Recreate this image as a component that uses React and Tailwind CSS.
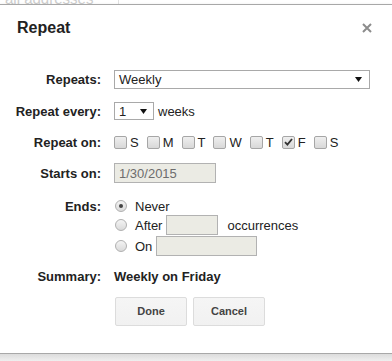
const DAYS = [
  { k: 'su', l: 'S' },
  { k: 'mo', l: 'M' },
  { k: 'tu', l: 'T' },
  { k: 'we', l: 'W' },
  { k: 'th', l: 'T' },
  { k: 'fr', l: 'F', on: true },
  { k: 'sa', l: 'S' },
]

function Arrow() {
  return (
    <svg width="7" height="5" viewBox="0 0 7 5" className="shrink-0">
      <polygon points="0,0 7,0 3.5,5" fill="#111" />
    </svg>
  )
}

function Check({ on }) {
  return (
    <span className="w-[13px] h-[13px] shrink-0 rounded-[2px] border border-[#a6a6a6] bg-gradient-to-b from-[#efefef] to-[#d8d8d8] flex items-center justify-center">
      {on && (
        <svg width="9" height="8" viewBox="0 0 9 8">
          <path d="M1 4.2 L3.4 6.6 L8 1" stroke="#333" strokeWidth="1.8" fill="none" />
        </svg>
      )}
    </span>
  )
}

function Radio({ on }) {
  return (
    <span className="w-[12px] h-[12px] shrink-0 rounded-full border border-[#b0b0b0] bg-gradient-to-b from-[#f4f4f4] to-[#dadada] flex items-center justify-center">
      {on && <span className="w-[4px] h-[4px] rounded-full bg-[#444]" />}
    </span>
  )
}

function Row({ label, h, mt, children }) {
  return (
    <div className={`flex items-center ${h} ${mt}`}>
      <div className="w-[101px] text-right font-bold text-[#222]">{label}</div>
      <div className="pl-[13px] flex items-center h-full">{children}</div>
    </div>
  )
}

export default function App() {
  return (
    <div className="w-[392px] h-[361px] bg-[#ececec] flex flex-col text-[13px] leading-none overflow-hidden" style={{ fontFamily: '"Liberation Sans", Arial, sans-serif' }}>

      {/* page behind the dialog */}
      <div className="h-[4px] bg-white flex overflow-hidden shrink-0">
        <div className="w-[119px] border-r border-[#e2e2e2] pl-[5px] text-[#cdcdcd] text-[15px] leading-none -mt-[9px]">all addresses</div>
      </div>

      {/* dialog */}
      <div className="flex-1 bg-white border-t border-b border-[#a8a8a8] flex flex-col shadow-[0_1px_3px_rgba(0,0,0,0.15)]">

        <div className="flex items-center justify-between pl-[17px] pr-[20px] pt-[13px] h-[33px]">
          <span className="text-[16px] font-bold text-[#222]">Repeat</span>
          <svg width="10" height="10" viewBox="0 0 10 10">
            <path d="M1 1 L9 9 M9 1 L1 9" stroke="#8c8c8c" strokeWidth="2" />
          </svg>
        </div>

        <Row label="Repeats:" h="h-[19px]" mt="mt-[32px]">
          <div className="w-[256px] h-[19px] border border-[#a9a9a9] bg-white flex items-center justify-between pl-[4px] pr-[7px] text-[#222]">
            <span>Weekly</span>
            <Arrow />
          </div>
        </Row>

        <Row label="Repeat every:" h="h-[18px]" mt="mt-[13px]">
          <div className="w-[40px] h-[18px] border border-[#a9a9a9] bg-white flex items-center justify-between pl-[4px] pr-[6px] text-[#222]">
            <span>1</span>
            <Arrow />
          </div>
          <span className="ml-[4px] text-[#222]">weeks</span>
        </Row>

        <Row label="Repeat on:" h="h-[16px]" mt="mt-[14px]">
          {DAYS.map(d => (
            <span key={d.k} className="flex items-center mr-[8px]">
              <Check on={d.on} />
              <span className="ml-[3px] text-[#222]">{d.l}</span>
            </span>
          ))}
        </Row>

        <Row label="Starts on:" h="h-[20px]" mt="mt-[13px]">
          <div className="w-[102px] h-[20px] border border-[#b2b2b2] bg-[#ebebe4] flex items-center pl-[4px] text-[#6d6d6d]">1/30/2015</div>
        </Row>

        <Row label="Ends:" h="h-[16px]" mt="mt-[15px]">
          <span className="ml-[1px]"><Radio on /></span>
          <span className="ml-[8px] text-[#222]">Never</span>
        </Row>
        <Row label="" h="h-[20px]" mt="mt-[1px]">
          <span className="ml-[1px]"><Radio /></span>
          <span className="ml-[8px] text-[#222]">After</span>
          <div className="ml-[4px] w-[52px] h-[20px] border border-[#b2b2b2] bg-[#ebebe4]" />
          <span className="ml-[9px] text-[#222]">occurrences</span>
        </Row>
        <Row label="" h="h-[20px]" mt="mt-[1px]">
          <span className="ml-[1px]"><Radio /></span>
          <span className="ml-[8px] text-[#222]">On</span>
          <div className="ml-[4px] w-[101px] h-[20px] border border-[#b2b2b2] bg-[#ebebe4]" />
        </Row>

        <Row label="Summary:" h="h-[16px]" mt="mt-[12px]">
          <span className="font-bold text-[#222]">Weekly on Friday</span>
        </Row>

        <div className="flex gap-[6px] pl-[115px] mt-[13px]">
          <button className="w-[72px] h-[29px] rounded-[2px] border border-[#dcdcdc] bg-gradient-to-b from-[#f5f5f5] to-[#f1f1f1] text-[11px] font-bold text-[#444]">Done</button>
          <button className="w-[72px] h-[29px] rounded-[2px] border border-[#dcdcdc] bg-gradient-to-b from-[#f5f5f5] to-[#f1f1f1] text-[11px] font-bold text-[#444]">Cancel</button>
        </div>
      </div>

      <div className="h-[7px] shrink-0 bg-gradient-to-b from-[#dcdcdc] to-[#efefef]" />
    </div>
  )
}
